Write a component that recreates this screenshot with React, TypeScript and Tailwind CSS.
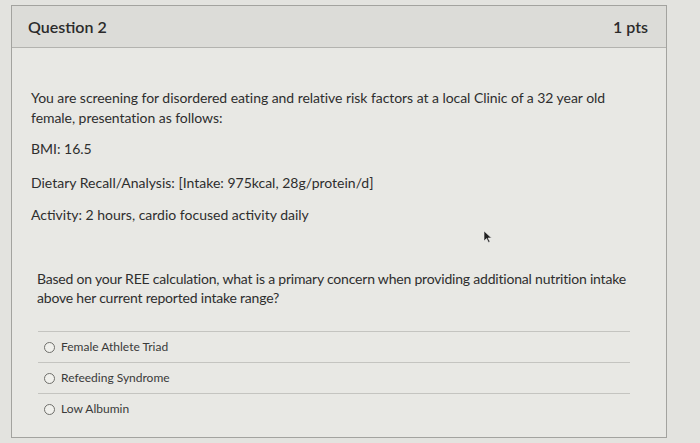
import React from 'react';

const options = ['Female Athlete Triad', 'Refeeding Syndrome', 'Low Albumin'];

export default function App() {
  return (
    <div
      className="relative w-[700px] h-[443px] overflow-hidden bg-[#e3e3df] pt-[5px] pl-[11px]"
      style={{ fontFamily: 'Lato, "Open Sans", sans-serif' }}
    >
      <div className="w-[656px] h-[433px] border border-[#a3a39f] bg-[#e8e8e4]">
        {/* header */}
        <div className="h-[42px] flex items-center justify-between pl-[16px] pr-[18px] bg-[#dcdcd8] border-b border-[#b3b3af]">
          <span className="text-[16px] font-semibold text-[#2b2b2b]">Question 2</span>
          <span className="text-[16px] font-semibold text-[#2b2b2b]">1 pts</span>
        </div>

        {/* body */}
        <div className="pl-[19px] pr-[20px] pt-[40px] text-[14px] text-[#2e2e2e]">
          <p className="leading-[20px] w-[590px] tracking-[-0.05px]">
            You are screening for disordered eating and relative risk factors at a local Clinic of a 32 year old
            female, presentation as follows:
          </p>
          <p className="leading-[20px] mt-[11px]">BMI: 16.5</p>
          <p className="leading-[20px] mt-[14px]">Dietary Recall/Analysis: [Intake: 975kcal, 28g/protein/d]</p>
          <p className="leading-[20px] mt-[12px]">Activity: 2 hours, cardio focused activity daily</p>

          <p className="leading-[19px] mt-[44px] pl-[6px] w-[616px] tracking-[-0.2px]">
            Based on your REE calculation, what is a primary concern when providing additional nutrition intake
            above her current reported intake range?
          </p>

          <div className="mt-[24px] ml-[7px] w-[592px]">
            {options.map((o) => (
              <div key={o} className="h-[31px] border-t border-[#c4c4c0] flex items-center pl-[6px]">
                <span className="w-[11px] h-[11px] rounded-full border border-[#6f6f6b] bg-[#f0f0ec] mr-[6px]" />
                <span className="text-[12px] text-[#3a3a3a]">{o}</span>
              </div>
            ))}
          </div>
        </div>
      </div>

      {/* mouse pointer */}
      <svg className="absolute left-[483px] top-[230px]" width="10" height="13" viewBox="0 0 10 13">
        <path d="M1 1 L1 11 L3.5 8.5 L5.5 12.5 L7 11.8 L5 8 L8.5 8 Z" fill="#222" stroke="#eee" strokeWidth="0.6" />
      </svg>
    </div>
  );
}
